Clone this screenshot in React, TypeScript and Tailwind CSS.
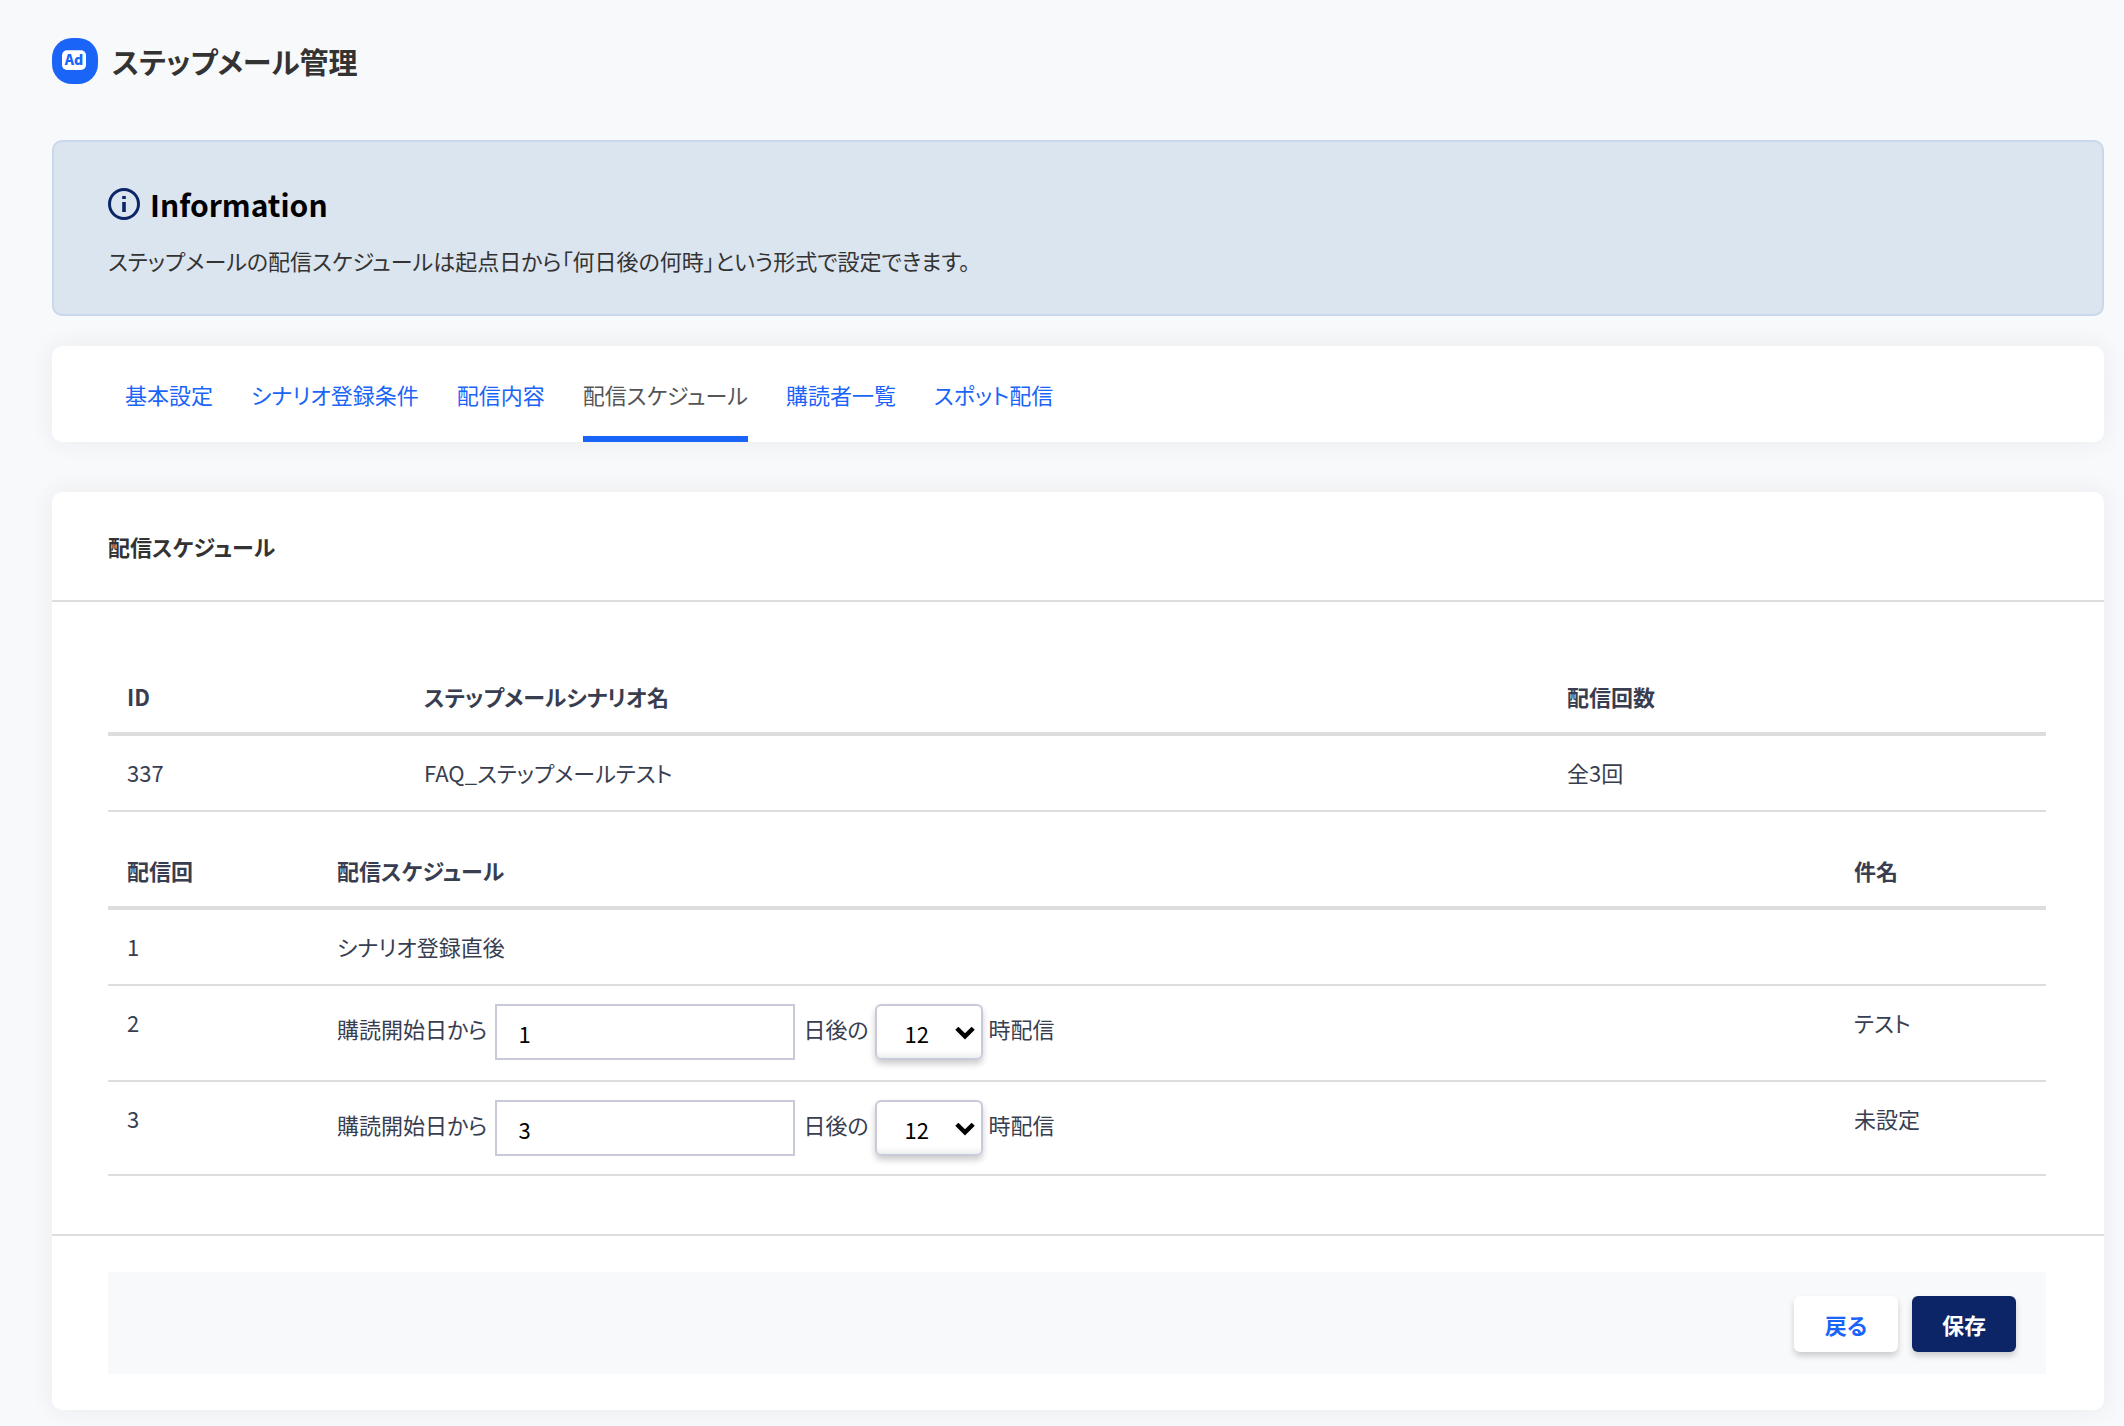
import { useState, type ReactNode } from "react";

const tabs = ["基本設定", "シナリオ登録条件", "配信内容", "配信スケジュール", "購読者一覧", "スポット配信"];

const steps = [
  { no: 1, subject: "" },
  { no: 2, days: "1", hour: "12", subject: "テスト" },
  { no: 3, days: "3", hour: "12", subject: "未設定" },
];

const hours = Array.from({ length: 24 }, (_, i) => String(i));

export default function App() {
  const [active, setActive] = useState("配信スケジュール");

  return (
    <div className="min-h-screen bg-[#f8f9fb] pt-[38px] pr-5 pb-4 pl-[52px] font-['Noto_Sans_CJK_JP',sans-serif] text-[22px] text-[#333] [font-feature-settings:'palt']">
      <header className="flex items-center gap-[14px]">
        <AdLogo />
        <h1 className="text-[29px] leading-[46px] font-bold">ステップメール管理</h1>
      </header>

      <section className="mt-14 rounded-[10px] border-2 border-[#c8d8ea] bg-[#dbe5ef] px-[54px] pt-[42px] pb-9">
        <h2 className="flex items-center gap-[10px] text-[30px] leading-[40px] font-bold text-black">
          <InfoIcon />
          Information
        </h2>
        <p className="mt-[18px] leading-[36px]">ステップメールの配信スケジュールは起点日から「何日後の何時」という形式で設定できます。</p>
      </section>

      <nav className="mt-[30px] flex gap-[38px] rounded-[10px] bg-white px-[73px] shadow-[0_0_24px_rgba(0,40,60,0.07)]">
        {tabs.map((tab) => (
          <a
            key={tab}
            href="#"
            onClick={() => setActive(tab)}
            className={`border-b-[6px] pt-[30px] pb-6 leading-[36px] ${tab === active ? "border-[#1a64f8] text-[#555]" : "border-transparent text-[#1a64f8]"}`}
          >
            {tab}
          </a>
        ))}
      </nav>

      <main className="mt-[50px] rounded-[10px] bg-white shadow-[0_0_24px_rgba(0,40,60,0.07)]">
        <h2 className="border-b-2 border-[#ddd] px-14 py-9 leading-[36px] font-bold">配信スケジュール</h2>

        <div className="pt-[60px] pr-[58px] pb-[58px] pl-14 text-[#383e50]">
          <table className="w-full table-fixed border-separate border-spacing-0 text-left">
            <thead>
              <tr>
                <Th className="w-[297px]">ID</Th>
                <Th>ステップメールシナリオ名</Th>
                <Th className="w-[498px]">配信回数</Th>
              </tr>
            </thead>
            <tbody>
              <tr>
                <Td>337</Td>
                <Td>FAQ_ステップメールテスト</Td>
                <Td>全3回</Td>
              </tr>
            </tbody>
          </table>

          <table className="mt-6 w-full table-fixed border-separate border-spacing-0 text-left">
            <thead>
              <tr>
                <Th className="w-[210px]">配信回</Th>
                <Th>配信スケジュール</Th>
                <Th className="w-[211px]">件名</Th>
              </tr>
            </thead>
            <tbody className="[&_tr:last-child_td]:pb-[18px]">
              {steps.map((s) => (
                <tr key={s.no}>
                  <Td>{s.no}</Td>
                  <Td>{s.days ? <ScheduleFields no={s.no} days={s.days} hour={s.hour} /> : "シナリオ登録直後"}</Td>
                  <Td>{s.subject}</Td>
                </tr>
              ))}
            </tbody>
          </table>
        </div>

        <footer className="border-t-2 border-[#ddd] py-9 pr-[58px] pl-14">
          <div className="flex justify-end gap-[14px] bg-[#f8f9fb] px-[30px] pt-6 pb-[22px]">
            <button type="button" className="h-14 w-[104px] rounded-md bg-white font-bold text-[#1a64f8] shadow-[0_4px_6px_rgba(0,0,0,0.18)]">戻る</button>
            <button type="submit" className="h-14 w-[104px] rounded-md bg-[#0b2566] font-bold text-white shadow-[0_4px_6px_rgba(0,0,0,0.18)]">保存</button>
          </div>
        </footer>
      </main>
    </div>
  );
}

function Th({ children, className = "" }: { children: ReactNode; className?: string }) {
  return <th className={`border-b-4 border-[#ddd] px-[19px] pt-4 pb-[18px] leading-[36px] font-bold ${className}`}>{children}</th>;
}

function Td({ children }: { children: ReactNode }) {
  return <td className="border-b-2 border-[#ddd] px-[19px] pt-[18px] pb-5 align-top leading-[36px]">{children}</td>;
}

function ScheduleFields({ no, days, hour }: { no: number; days: string; hour?: string }) {
  return (
    <div className="flex items-center">
      <label htmlFor={`days-${no}`} className="pb-2">購読開始日から</label>
      <input
        id={`days-${no}`}
        type="text"
        defaultValue={days}
        className="ml-2 h-14 w-[300px] border-2 border-[#c8cad9] bg-white px-[21px] pt-0.5 text-black"
      />
      <label htmlFor={`hour-${no}`} className="ml-2 pb-2">日後の</label>
      <div className="relative mx-[6px]">
        <select
          id={`hour-${no}`}
          defaultValue={hour}
          className="block h-14 w-[108px] appearance-none rounded-md border-2 border-[#c8cad9] bg-linear-to-b from-white from-85% to-[#eeeff1] pt-0.5 pl-7 text-black shadow-[0_4px_6px_rgba(0,0,0,0.2)]"
        >
          {hours.map((h) => <option key={h}>{h}</option>)}
        </select>
        <svg className="pointer-events-none absolute top-[22px] right-2 h-[14px] w-5" viewBox="0 0 20 14" fill="none" stroke="#000" strokeWidth="4.4">
          <path d="M1.8 2.2 10 10.4l8.2-8.2" />
        </svg>
      </div>
      <span className="pb-2">時配信</span>
    </div>
  );
}

function AdLogo() {
  return (
    <svg className="h-[46px] w-[46px]" viewBox="0 0 46 46" aria-hidden="true">
      <rect width="46" height="46" rx="20" fill="#1a64f8" />
      <rect x="10" y="12.3" width="24" height="19.6" rx="5" fill="#fff" />
      <text x="22" y="27" textAnchor="middle" fill="#1a64f8" className="font-['Noto_Sans_CJK_JP',sans-serif] text-[14px] font-black">Ad</text>
    </svg>
  );
}

function InfoIcon() {
  return (
    <svg className="h-8 w-8" viewBox="0 0 32 32" fill="none" aria-hidden="true">
      <circle cx="16" cy="16" r="14.5" stroke="#0b2566" strokeWidth="3" />
      <path d="M16 14v10M16 8v3" stroke="#0b2566" strokeWidth="3.6" />
    </svg>
  );
}
